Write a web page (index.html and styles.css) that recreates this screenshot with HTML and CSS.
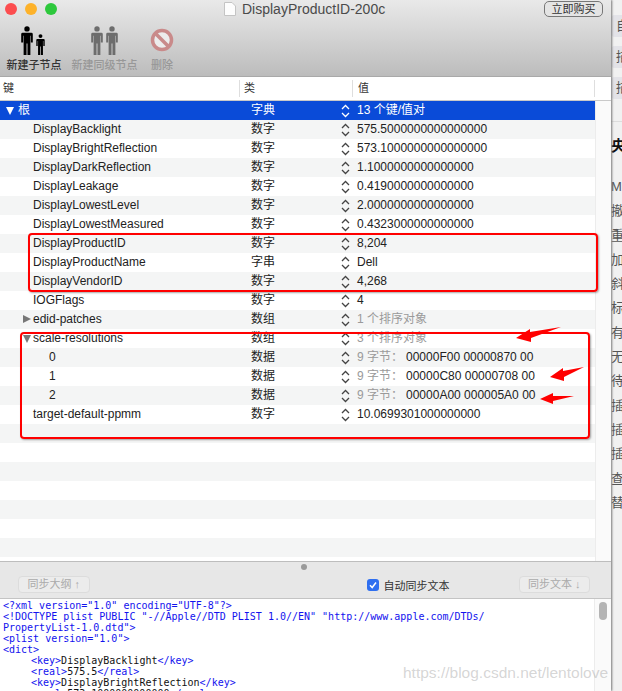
FILE: index.html
```html
<!doctype html>
<html>
	<head>
		<meta charset="utf-8" />
		<title>DisplayProductID-200c</title>
		<link rel="stylesheet" href="styles.css">
	</head>
	<body>
		<svg class="defs" width="0" height="0">
			<symbol id="updown" viewBox="0 0 9 14">
				<path d="M1 5 L4.5 1.5 L8 5 M1 9 L4.5 12.5 L8 9" fill="none" stroke="currentColor" stroke-width="1.3" />
			</symbol>
			<symbol id="man" viewBox="0 0 12 30">
				<circle cx="6" cy="3" r="2.8" />
				<path d="M1.5 7 H10.500 Q12 7 12 8.500 V17 H10 V10 H9.500 V30 H6.500 V18 H5.500 V30 H2.500 V10 H2 V17 H0 V8.500 Q0 7 1.500 7 Z" />
			</symbol>
		</svg>
		<div class="window">
			<div class="top">
				<div class="titlebar">
					<div class="lights">
						<span class="light red"></span>
						<span class="light yellow"></span>
						<span class="light green"></span>
					</div>
					<div class="title">
						<svg class="doc" width="12" height="14" viewBox="0 0 12 14"><path d="M0.500 0.500 H8 L11.500 4 V13.500 H0.500 Z" fill="#fdfdfd" stroke="#c4c4c4" /></svg>
						<span>DisplayProductID-200c</span>
					</div>
					<div class="buy">立即购买</div>
				</div>
				<div class="toolbar">
					<div class="tool tool-child">
						<div class="tool-icon">
							<svg class="man" width="12" height="29"><use href="#man" /></svg>
							<svg class="man" width="9" height="21"><use href="#man" /></svg>
						</div>
						<span>新建子节点</span>
					</div>
					<div class="tool tool-sibling off">
						<div class="tool-icon">
							<svg class="man" width="12" height="29"><use href="#man" /></svg>
							<svg class="man" width="12" height="29"><use href="#man" /></svg>
						</div>
						<span>新建同级节点</span>
					</div>
					<div class="tool tool-delete off">
						<div class="tool-icon">
							<svg width="24" height="24" viewBox="0 0 24 24"><circle cx="12" cy="12" r="9.500" fill="#ececec" stroke="#c98a8a" stroke-width="3.500" /><path d="M5.500 5.500 L18.500 18.500" stroke="#c98a8a" stroke-width="3.500" /></svg>
						</div>
						<span>删除</span>
					</div>
				</div>
			</div>

			<div class="outline">
				<div class="head">
					<div class="hcell hkey">键</div>
					<div class="hcell htype">类</div>
					<div class="hcell hval">值</div>
					<div class="hcell hend"></div>
				</div>
				<div class="table">
					<div class="rows">
						<div class="row selected">
							<div class="key root"><i class="tri-down white"></i>根</div>
							<div class="type">字典</div>
							<svg class="updown"><use href="#updown" /></svg>
							<div class="val">13 个键/值对</div>
						</div>
						<div class="row"><div class="key">DisplayBacklight</div><div class="type">数字</div><svg class="updown"><use href="#updown" /></svg><div class="val">575.5000000000000000</div></div>
						<div class="row"><div class="key">DisplayBrightReflection</div><div class="type">数字</div><svg class="updown"><use href="#updown" /></svg><div class="val">573.1000000000000000</div></div>
						<div class="row"><div class="key">DisplayDarkReflection</div><div class="type">数字</div><svg class="updown"><use href="#updown" /></svg><div class="val">1.1000000000000000</div></div>
						<div class="row"><div class="key">DisplayLeakage</div><div class="type">数字</div><svg class="updown"><use href="#updown" /></svg><div class="val">0.4190000000000000</div></div>
						<div class="row"><div class="key">DisplayLowestLevel</div><div class="type">数字</div><svg class="updown"><use href="#updown" /></svg><div class="val">2.0000000000000000</div></div>
						<div class="row"><div class="key">DisplayLowestMeasured</div><div class="type">数字</div><svg class="updown"><use href="#updown" /></svg><div class="val">0.4323000000000000</div></div>
						<div class="row"><div class="key">DisplayProductID</div><div class="type">数字</div><svg class="updown"><use href="#updown" /></svg><div class="val">8,204</div></div>
						<div class="row"><div class="key">DisplayProductName</div><div class="type">字串</div><svg class="updown"><use href="#updown" /></svg><div class="val">Dell</div></div>
						<div class="row"><div class="key">DisplayVendorID</div><div class="type">数字</div><svg class="updown"><use href="#updown" /></svg><div class="val">4,268</div></div>
						<div class="row"><div class="key">IOGFlags</div><div class="type">数字</div><svg class="updown"><use href="#updown" /></svg><div class="val">4</div></div>
						<div class="row"><div class="key"><i class="tri-right"></i>edid-patches</div><div class="type">数组</div><svg class="updown"><use href="#updown" /></svg><div class="val dim">1 个排序对象</div></div>
						<div class="row"><div class="key"><i class="tri-down"></i>scale-resolutions</div><div class="type">数组</div><svg class="updown"><use href="#updown" /></svg><div class="val dim">3 个排序对象</div></div>
						<div class="row"><div class="key sub">0</div><div class="type">数据</div><svg class="updown"><use href="#updown" /></svg><div class="val"><span class="dim">9 字节：</span><span class="hex">00000F00 00000870 00</span></div></div>
						<div class="row"><div class="key sub">1</div><div class="type">数据</div><svg class="updown"><use href="#updown" /></svg><div class="val"><span class="dim">9 字节：</span><span class="hex">00000C80 00000708 00</span></div></div>
						<div class="row"><div class="key sub">2</div><div class="type">数据</div><svg class="updown"><use href="#updown" /></svg><div class="val"><span class="dim">9 字节：</span><span class="hex">00000A00 000005A0 00</span></div></div>
						<div class="row"><div class="key">target-default-ppmm</div><div class="type">数字</div><svg class="updown"><use href="#updown" /></svg><div class="val">10.0699301000000000</div></div>
					</div>
					<div class="track"></div>
				</div>
				<div class="mark mark-a"></div>
				<div class="mark mark-b"></div>
				<svg class="arrows" width="611" height="460" viewBox="0 101 611 460">
					<path d="M561 327 L530 332 L530 329 L516 338 L531 342 L531 338 Z" />
					<path d="M584 367 L563 371 L563 368 L550 377 L564 381 L564 377 Z" />
					<path d="M574 396 L553 396 L553 393 L540 399 L553 404 L553 401 Z" />
				</svg>
			</div>

			<div class="syncbar">
				<div class="dot"></div>
				<div class="btn">同步大纲 ↑</div>
				<label class="auto">
					<span class="check"><svg width="12" height="12" viewBox="0 0 12 12"><path d="M3 6.200 L5.200 8.500 L9 3.500" fill="none" stroke="#fff" stroke-width="1.500" /></svg></span>
					自动同步文本
				</label>
				<div class="btn">同步文本 ↓</div>
			</div>

			<div class="source">
				<div class="code">
					<div>&lt;?xml version="1.0" encoding="UTF-8"?&gt;</div>
					<div>&lt;!DOCTYPE plist PUBLIC "-//Apple//DTD PLIST 1.0//EN" "http://www.apple.com/DTDs/</div>
					<div>PropertyList-1.0.dtd"&gt;</div>
					<div>&lt;plist version="1.0"&gt;</div>
					<div>&lt;dict&gt;</div>
					<div class="in">&lt;key&gt;<b>DisplayBacklight</b>&lt;/key&gt;</div>
					<div class="in">&lt;real&gt;<b>575.5</b>&lt;/real&gt;</div>
					<div class="in">&lt;key&gt;<b>DisplayBrightReflection</b>&lt;/key&gt;</div>
					<div class="in">&lt;real&gt;<b>573.1000000000000</b>&lt;/real&gt;</div>
				</div>
				<div class="codebar"><div class="thumb"></div></div>
				<div class="watermark">https://blog.csdn.net/lentolove</div>
			</div>
		</div>

		<div class="side">
			<div class="pills">
				<div class="pill">自</div>
				<div class="pill">描</div>
				<div class="pill">描</div>
			</div>
			<div class="side-title">央</div>
			<div class="side-list">
				<div>M</div><div>撤</div><div>重</div><div>加</div><div>斜</div><div>标</div><div>有</div><div>无</div><div>待</div><div>插</div><div>插</div><div>插</div><div>查</div><div>替</div>
			</div>
		</div>
	</body>
</html>
```

FILE: styles.css
```css
*{
	margin:0px;
	padding:0px;
	box-sizing:border-box;
	font-family:"Liberation Sans","Noto Sans CJK SC",sans-serif;
}
body,html{
	width:622px;
	height:691px;
	overflow:hidden;
	background-color:#f1f1f1;
}
body{
	display:flex;
}
.defs{
	position:absolute;
}
.window{
	width:611px;
	height:691px;
	flex:none;
	display:flex;
	flex-direction:column;
	box-shadow:1px 0 2px #777;
	position:relative;
	z-index:1;
}

/* title and toolbar */
.top{
	height:77px;
	background:linear-gradient(#e9e9e9,#bcbcbc);
	border-bottom:1px solid #a9a9a9;
}
.titlebar{
	height:20px;
	display:flex;
	align-items:center;
	padding:0 8px 2px 5px;
}
.lights{
	width:219px;
	display:flex;
	gap:8px;
}
.light{
	width:12px;
	height:12px;
	border-radius:50%;
}
.red{background-color:#fc4d4f;}
.yellow{background-color:#fdb22a;}
.green{background-color:#2dc83c;}
.title{
	flex:1;
	display:flex;
	align-items:center;
	gap:6px;
	font-size:14px;
	color:#4a4a4a;
}
.buy{
	width:59px;
	height:16px;
	line-height:14px;
	text-align:center;
	border:1px solid #777;
	border-radius:5px;
	font-size:11px;
	color:#333;
	background-color:#e4e4e4;
}
.toolbar{
	display:flex;
	padding:4px 0 0 6px;
}
.tool{
	display:flex;
	flex-direction:column;
	align-items:center;
	font-size:11px;
	font-weight:500;
	line-height:14px;
	color:#333;
}
.tool.off{
	color:#989898;
}
.tool-icon{
	height:31px;
	display:flex;
	align-items:flex-end;
	gap:3px;
	margin-bottom:3px;
}
.tool-child{
	width:56px;
}
.tool-child .tool-icon{
	padding-right:2px;
}
.tool-sibling{
	width:67px;
	margin-left:9px;
}
.tool-delete{
	width:24px;
	margin-left:12px;
}
.tool-delete .tool-icon{
	align-items:center;
}
.man{
	fill:#000;
}
.off .man{
	fill:#6d6d6d;
}

/* plist outline */
.outline{
	height:484px;
	display:flex;
	flex-direction:column;
	position:relative;
}
.head{
	height:24px;
	flex:none;
	display:flex;
	align-items:center;
	background-color:#fff;
	border-bottom:1px solid #c9c9c9;
	font-size:11px;
	color:#333;
}
.hcell{
	height:17px;
	line-height:17px;
	border-right:1px solid #dedede;
}
.hkey{width:240px;padding-left:3px;}
.htype{width:113px;padding-left:4px;}
.hval{width:242px;padding-left:5px;}
.hend{flex:1;border-right:0;}
.table{
	flex:1;
	min-height:0;
	display:flex;
}
.rows{
	width:595px;
	background:repeating-linear-gradient(#f4f5f5 0,#f4f5f5 19px,#fff 19px,#fff 38px);
	background-position:0 19px;
}
.track{
	flex:1;
	background-color:#fafafa;
	border-left:1px solid #ececec;
}
.row{
	height:19px;
	display:grid;
	grid-template-columns:251px 87px 17px 1fr;
	align-items:center;
	font-size:12px;
	line-height:19px;
	color:#222;
}
.key{
	padding-left:33px;
	position:relative;
	white-space:nowrap;
}
.key.sub{
	padding-left:49px;
}
.key.root{
	padding-left:18px;
	color:#fff;
}
.selected{
	background-color:#0a4bd8;
	color:#fff;
}
.updown{
	width:9px;
	height:14px;
	margin-left:3px;
	color:#444;
}
.selected .updown{
	color:#fff;
}
.val{
	padding-left:2px;
	white-space:nowrap;
}
.dim{
	color:#9a9a9a;
}
.hex{
	margin-left:3px;
	color:#222;
}
.tri-down,.tri-right{
	position:absolute;
	width:0;
	height:0;
}
.tri-down{
	left:23px;
	top:6px;
	border-left:4.5px solid transparent;
	border-right:4.5px solid transparent;
	border-top:8px solid #777;
}
.tri-down.white{
	left:6px;
	border-top-color:#fff;
}
.tri-right{
	left:23px;
	top:5px;
	border-top:4.5px solid transparent;
	border-bottom:4.5px solid transparent;
	border-left:8px solid #777;
}

/* hand drawn marks on the screenshot */
.mark{
	position:absolute;
	border:2px solid #f00;
	border-radius:4px;
	box-shadow:1px 1px 2px rgba(0,0,0,.35);
}
.mark-a{
	left:28px;
	top:156px;
	width:570px;
	height:59px;
}
.mark-b{
	left:20px;
	top:255px;
	width:570px;
	height:107px;
}
.arrows{
	position:absolute;
	left:0;
	top:24px;
	fill:#f00;
}

/* sync bar */
.syncbar{
	height:38px;
	flex:none;
	display:flex;
	align-items:center;
	padding:9px 21px 0 18px;
	background-color:#e7e7e7;
	border-top:1px solid #bdbdbd;
	border-bottom:1px solid #c4c4c4;
	position:relative;
}
.dot{
	position:absolute;
	left:301px;
	top:2px;
	width:6px;
	height:6px;
	border-radius:50%;
	background-color:#9a9a9a;
}
.btn{
	width:72px;
	height:17px;
	line-height:15px;
	text-align:center;
	border:1px solid #dcdcdc;
	border-radius:4px;
	background-color:#ececec;
	font-size:11px;
	color:#aaa;
}
.auto{
	display:flex;
	align-items:center;
	gap:5px;
	margin-left:277px;
	margin-right:69px;
	font-size:11px;
	color:#333;
	white-space:nowrap;
}
.check{
	width:12px;
	height:12px;
	border-radius:3px;
	background-color:#2f6ff0;
	display:flex;
}

/* xml text */
.source{
	flex:1;
	min-height:0;
	display:flex;
	background-color:#fff;
	position:relative;
}
.code{
	width:595px;
	padding:1px 0 0 3px;
	font-size:10px;
	line-height:11px;
	color:#1212ee;
	white-space:nowrap;
	overflow:hidden;
}
.code div,.code b{
	font-family:"DejaVu Sans Mono",monospace;
	font-weight:normal;
}
.code b{
	color:#111;
}
.code .in{
	padding-left:28px;
}
.codebar{
	flex:1;
	padding:3px 4px;
	background-color:#fafafa;
	border-left:1px solid #ececec;
}
.thumb{
	width:8px;
	height:18px;
	border-radius:4px;
	background-color:#b4b4b4;
}
.watermark{
	position:absolute;
	left:403px;
	top:65px;
	font-size:15.500px;
	color:rgba(150,150,150,.4);
	white-space:nowrap;
}

/* next window, cut off by the crop */
.side{
	flex:1;
	min-width:0;
	overflow:hidden;
	padding-top:15px;
	font-size:13px;
	color:#555;
}
.pills{
	display:flex;
	flex-direction:column;
	gap:9px;
	padding-bottom:22px;
	border-bottom:1px solid #ddd;
}
.pill{
	height:22px;
	line-height:22px;
	padding-left:5px;
	background-color:#e3e3e8;
	border-radius:4px 0 0 4px;
}
.side-title{
	margin-top:14px;
	font-size:15px;
	font-weight:bold;
	color:#111;
	line-height:20px;
}
.side-list{
	margin-top:19px;
	line-height:24.300px;
}
```
